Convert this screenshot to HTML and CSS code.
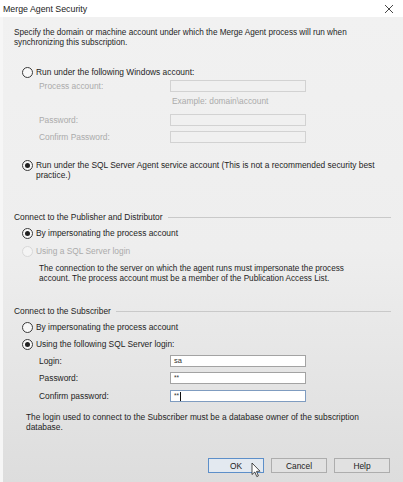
FILE: index.html
```html
<!DOCTYPE html>
<html>
<head>
<meta charset="utf-8">
<link rel="stylesheet" href="styles.css">
</head>
<body>
<div class="window">
  <div class="titlebar">
    <span class="title">Merge Agent Security</span>
    <svg class="close" width="10" height="10" viewBox="0 0 10 10"><path d="M1 1 L9 9 M9 1 L1 9" stroke="#333" stroke-width="0.9" fill="none"/></svg>
  </div>
  <div class="content">
    <p class="desc">Specify the domain or machine account under which the Merge Agent process will run when synchronizing this subscription.</p>

    <div class="radio-row r1"><span class="radio"></span><span>Run under the following Windows account:</span></div>
    <div class="field-row disabled f-proc"><span class="flabel">Process account:</span><span class="input dis"></span></div>
    <div class="example disabled">Example: domain\account</div>
    <div class="field-row disabled f-pw"><span class="flabel">Password:</span><span class="input dis"></span></div>
    <div class="field-row disabled f-cpw"><span class="flabel">Confirm Password:</span><span class="input dis"></span></div>

    <div class="radio-row multi r2"><span class="radio checked"></span><span>Run under the SQL Server Agent service account (This is not a recommended security best practice.)</span></div>

    <div class="group-head g1"><span>Connect to the Publisher and Distributor</span><span class="rule"></span></div>
    <div class="radio-row r3"><span class="radio checked"></span><span>By impersonating the process account</span></div>
    <div class="radio-row disabled r4"><span class="radio dis"></span><span>Using a SQL Server login</span></div>
    <p class="note1">The connection to the server on which the agent runs must impersonate the process account. The process account must be a member of the Publication Access List.</p>

    <div class="group-head g2"><span>Connect to the Subscriber</span><span class="rule"></span></div>
    <div class="radio-row r5"><span class="radio"></span><span>By impersonating the process account</span></div>
    <div class="radio-row r6"><span class="radio checked"></span><span>Using the following SQL Server login:</span></div>
    <div class="field-row f-login"><span class="flabel">Login:</span><span class="input">sa</span></div>
    <div class="field-row f-spw"><span class="flabel">Password:</span><span class="input stars">**</span></div>
    <div class="field-row f-scpw"><span class="flabel">Confirm password:</span><span class="input stars focus">**<span class="caret"></span></span></div>
    <p class="note2">The login used to connect to the Subscriber must be a database owner of the subscription database.</p>

    <div class="buttons">
      <span class="btn default">OK
        <svg class="cursor" width="10" height="16" viewBox="0 0 10 16"><path d="M1 1 L1 12.5 L3.8 10 L5.8 14.6 L7.4 13.9 L5.5 9.4 L9 9.2 Z" fill="#fff" stroke="#222" stroke-width="0.8" stroke-linejoin="round"/></svg>
      </span>
      <span class="btn">Cancel</span>
      <span class="btn">Help</span>
    </div>
  </div>
</div>
</body>
</html>
```
FILE: styles.css
```css
html, body {
  margin: 0;
  padding: 0;
}
body {
  width: 403px;
  height: 482px;
  overflow: hidden;
  font-family: "Liberation Sans", Arial, sans-serif;
  font-size: 8.4px;
  color: #1e1e1e;
  background: #ececec;
}
.window {
  height: 482px;
  display: flex;
  flex-direction: column;
}
.titlebar {
  height: 17px;
  flex: none;
  background: #ffffff;
  display: flex;
  align-items: center;
  justify-content: space-between;
  padding: 0 9px 0 3px;
}
.title {
  font-size: 8.8px;
  color: #222;
  margin-top: 1px;
}
.close {
  display: block;
}
.content {
  flex: 1;
  padding: 0 12px 0 11px;
  background: linear-gradient(to bottom, #f1f1f1 0%, #eeeeee 50%, #dddddd 100%);
  border-left: 3px solid #f6f6f6;
  display: flex;
  flex-direction: column;
}
p {
  margin: 0;
}
.desc {
  font-size: 8.2px;
  line-height: 10px;
  margin-top: 11px;
  padding-right: 30px;
}
.radio-row {
  display: flex;
  align-items: center;
  height: 12px;
  margin-left: 8px;
  gap: 3px;
}
.radio-row.multi {
  height: auto;
  align-items: flex-start;
  line-height: 10px;
  padding-right: 14px;
}
.radio-row.multi .radio {
  margin-top: -0.5px;
}
.radio {
  flex: none;
  box-sizing: border-box;
  width: 11px;
  height: 11px;
  border-radius: 50%;
  border: 1px solid #3a3a3a;
  background: #f8f8f8;
  display: flex;
  align-items: center;
  justify-content: center;
}
.radio.checked::after {
  content: "";
  width: 5px;
  height: 5px;
  border-radius: 50%;
  background: #222;
}
.radio.dis {
  border-color: #d8d8d8;
  background: #f4f4f4;
}
.disabled {
  color: #ababab;
}
.field-row {
  display: flex;
  align-items: center;
  height: 12px;
  padding-left: 25px;
}
.flabel {
  width: 131px;
  flex: none;
}
.input {
  box-sizing: border-box;
  width: 136px;
  height: 12px;
  border: 1px solid #a3a3a3;
  background: #ffffff;
  font-size: 7.5px;
  line-height: 10px;
  padding-left: 3px;
  color: #333;
  display: flex;
  align-items: center;
}
.input.dis {
  border-color: #d2d2d2;
  background: #f0f0f0;
}
.input.stars {
  font-size: 6.5px;
  align-items: flex-start;
}
.input.focus {
  border-color: #7f9cc0;
}
.caret {
  display: inline-block;
  width: 1px;
  height: 9px;
  background: #111;
  margin-left: 0.5px;
  align-self: center;
}
.f-proc { margin-top: 2px; }
.example {
  padding-left: 158px;
  line-height: 10px;
  margin-top: 4px;
}
.f-pw { margin-top: 8px; }
.f-cpw { margin-top: 5px; }
.r1 { margin-top: 18px; }
.r2 { margin-top: 17px; }
.group-head {
  display: flex;
  align-items: center;
  line-height: 10px;
  gap: 5px;
}
.rule {
  flex: 1;
  height: 1px;
  background: #c9c9c9;
}
.g1 { margin-top: 32px; }
.r3 { margin-top: 5px; }
.r4 { margin-top: 6px; }
.note1 {
  font-size: 8.2px;
  margin-top: 7px;
  padding-left: 25px;
  line-height: 10px;
  padding-right: 38px;
}
.g2 { margin-top: 22px; }
.r5 { margin-top: 5px; }
.r6 { margin-top: 5px; }
.f-login { margin-top: 5px; }
.f-spw { margin-top: 5px; }
.f-scpw { margin-top: 6px; }
.note2 {
  margin-top: 10px;
  padding-left: 12px;
  line-height: 10px;
  padding-right: 10px;
}
.buttons {
  margin-top: 26px;
  display: flex;
  justify-content: flex-end;
  gap: 7px;
  padding-right: 1px;
}
.btn {
  box-sizing: border-box;
  width: 56px;
  height: 15px;
  border: 1px solid #adadad;
  background: #e1e1e1;
  display: flex;
  align-items: center;
  justify-content: center;
  color: #222;
  position: relative;
}
.btn.default {
  border-color: #5d8fc9;
  background: #e3e9f0;
}
.cursor {
  position: absolute;
  left: 42px;
  top: 3px;
}
```
